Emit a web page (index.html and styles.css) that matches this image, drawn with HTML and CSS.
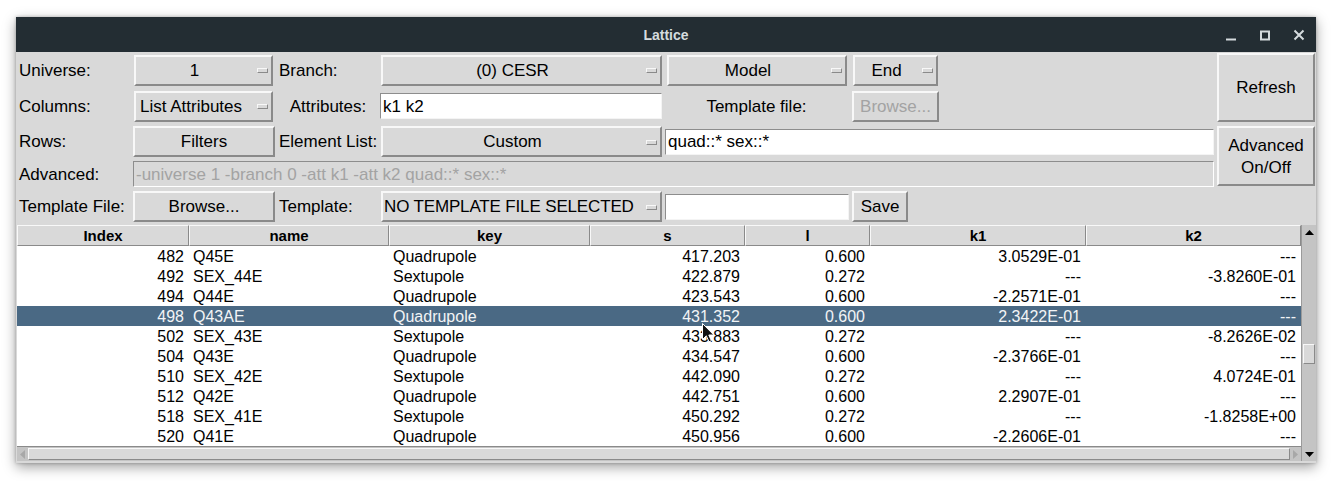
FILE: index.html
```html
<!DOCTYPE html>
<html>
<head>
<meta charset="utf-8">
<title>Lattice</title>
<link rel="stylesheet" href="styles.css">
</head>
<body>
<div class="window">
  <div class="titlebar">
    <div></div>
    <div class="title">Lattice</div>
    <div class="controls">
      <span class="ctl"><svg width="12" height="12" viewBox="0 0 12 12"><path d="M1 10.5H11" stroke="#d5dbde" stroke-width="2" fill="none"/></svg></span>
      <span class="ctl"><svg width="12" height="12" viewBox="0 0 12 12"><rect x="2" y="2.5" width="8" height="8" stroke="#d5dbde" stroke-width="2" fill="none"/></svg></span>
      <span class="ctl"><svg width="12" height="12" viewBox="0 0 12 12"><path d="M1.5 1.5L10.5 10.5M10.5 1.5L1.5 10.5" stroke="#d5dbde" stroke-width="2" fill="none"/></svg></span>
    </div>
  </div>

  <div class="form">
    <!-- row 1 -->
    <div class="lbl rowstart">Universe:</div>
    <div class="mbtn m-c2"><span class="mtext">1</span><span class="ind"></span></div>
    <div class="lbl lbl-c3">Branch:</div>
    <div class="mbtn m-c4"><span class="mtext">(0) CESR</span><span class="ind"></span></div>
    <div class="mbtn m-c5"><span class="mtext">Model</span><span class="ind"></span></div>
    <div class="mbtn m-c6"><span class="mtext">End</span><span class="ind"></span></div>
    <div class="btn refresh">Refresh</div>

    <!-- row 2 -->
    <div class="lbl rowstart">Columns:</div>
    <div class="mbtn m-c2"><span class="mtext mtext-left">List Attributes</span><span class="ind"></span></div>
    <div class="lbl lbl-center">Attributes:</div>
    <div class="entry e-c4">k1 k2</div>
    <div class="lbl lbl-center">Template file:</div>
    <div class="btn b-c6 disabled">Browse...</div>

    <!-- row 3 -->
    <div class="lbl rowstart">Rows:</div>
    <div class="btn b-c2">Filters</div>
    <div class="lbl lbl-c3">Element List:</div>
    <div class="mbtn m-c4"><span class="mtext">Custom</span><span class="ind"></span></div>
    <div class="entry e-wide">quad::* sex::*</div>
    <div class="btn advbtn">Advanced<br>On/Off</div>

    <!-- row 4 -->
    <div class="lbl rowstart">Advanced:</div>
    <div class="entry e-adv disabled-entry">-universe 1 -branch 0 -att k1 -att k2 quad::* sex::*</div>

    <!-- row 5 -->
    <div class="lbl rowstart">Template File:</div>
    <div class="btn b-c2">Browse...</div>
    <div class="lbl lbl-c3">Template:</div>
    <div class="mbtn m-c4"><span class="mtext mtext-tight">NO TEMPLATE FILE SELECTED</span><span class="ind"></span></div>
    <div class="entry e-c5"></div>
    <div class="btn b-save">Save</div>
  </div>

  <div class="tablewrap">
    <div class="table">
      <div class="trow thead">
        <div class="th">Index</div>
        <div class="th">name</div>
        <div class="th">key</div>
        <div class="th">s</div>
        <div class="th">l</div>
        <div class="th">k1</div>
        <div class="th">k2</div>
      </div>
      <div class="tbody">
        <div class="trow"><div class="td r">482</div><div class="td">Q45E</div><div class="td">Quadrupole</div><div class="td r">417.203</div><div class="td r">0.600</div><div class="td r">3.0529E-01</div><div class="td r">---</div></div>
        <div class="trow"><div class="td r">492</div><div class="td">SEX_44E</div><div class="td">Sextupole</div><div class="td r">422.879</div><div class="td r">0.272</div><div class="td r">---</div><div class="td r">-3.8260E-01</div></div>
        <div class="trow"><div class="td r">494</div><div class="td">Q44E</div><div class="td">Quadrupole</div><div class="td r">423.543</div><div class="td r">0.600</div><div class="td r">-2.2571E-01</div><div class="td r">---</div></div>
        <div class="trow selected"><div class="td r">498</div><div class="td">Q43AE</div><div class="td">Quadrupole</div><div class="td r">431.352</div><div class="td r">0.600</div><div class="td r">2.3422E-01</div><div class="td r">---</div></div>
        <div class="trow"><div class="td r">502</div><div class="td">SEX_43E</div><div class="td">Sextupole</div><div class="td r">433.883</div><div class="td r">0.272</div><div class="td r">---</div><div class="td r">-8.2626E-02</div></div>
        <div class="trow"><div class="td r">504</div><div class="td">Q43E</div><div class="td">Quadrupole</div><div class="td r">434.547</div><div class="td r">0.600</div><div class="td r">-2.3766E-01</div><div class="td r">---</div></div>
        <div class="trow"><div class="td r">510</div><div class="td">SEX_42E</div><div class="td">Sextupole</div><div class="td r">442.090</div><div class="td r">0.272</div><div class="td r">---</div><div class="td r">4.0724E-01</div></div>
        <div class="trow"><div class="td r">512</div><div class="td">Q42E</div><div class="td">Quadrupole</div><div class="td r">442.751</div><div class="td r">0.600</div><div class="td r">2.2907E-01</div><div class="td r">---</div></div>
        <div class="trow"><div class="td r">518</div><div class="td">SEX_41E</div><div class="td">Sextupole</div><div class="td r">450.292</div><div class="td r">0.272</div><div class="td r">---</div><div class="td r">-1.8258E+00</div></div>
        <div class="trow"><div class="td r">520</div><div class="td">Q41E</div><div class="td">Quadrupole</div><div class="td r">450.956</div><div class="td r">0.600</div><div class="td r">-2.2606E-01</div><div class="td r">---</div></div>
      </div>
    </div>
    <div class="vscroll">
      <div class="arrow"><svg width="9" height="5" viewBox="0 0 9 5"><polygon points="0,5 9,5 4.5,0" fill="#000"/></svg></div>
      <div class="vtrack"><div class="vthumb" style="margin-top:105px"></div></div>
      <div class="arrow"><svg width="9" height="5" viewBox="0 0 9 5"><polygon points="0,0 9,0 4.5,5" fill="#000"/></svg></div>
    </div>
    <div class="hscroll">
      <div class="harrow"><svg width="5" height="9" viewBox="0 0 5 9"><polygon points="5,0 5,9 0,4.5" fill="#a8a8a8"/></svg></div>
      <div class="hthumb"></div>
      <div class="harrow"><svg width="5" height="9" viewBox="0 0 5 9"><polygon points="0,0 0,9 5,4.5" fill="#a8a8a8"/></svg></div>
    </div>
  </div>
</div>
<svg class="cursor" width="13" height="20" viewBox="0 0 13 20"><path d="M0.5 0.5V16.5L4.3 12.8L7 18.8L9.4 17.8L6.8 12H11.8Z" fill="#111" stroke="#fff" stroke-width="1"/></svg>
</body>
</html>
```

FILE: styles.css
```css
html, body {
  margin: 0;
  padding: 0;
}
body {
  background: #ffffff;
  font-family: "Liberation Sans", Arial, sans-serif;
  color: #000;
  width: 1331px;
  height: 481px;
  overflow: hidden;
  position: relative;
}
.window {
  margin: 17px 0 0 16px;
  width: 1300px;
  height: 446px;
  background: #d9d9d9;
  box-shadow: 0 4px 12px rgba(0, 0, 0, 0.38), 0 0 3px rgba(0, 0, 0, 0.25);
  display: flex;
  flex-direction: column;
}
.titlebar {
  height: 35px;
  flex: none;
  background: #232d33;
  display: grid;
  grid-template-columns: 1fr auto 1fr;
  align-items: center;
}
.title {
  color: #d5dbde;
  font-weight: bold;
  font-size: 14px;
  padding-top: 1px;
}
.controls {
  display: flex;
  justify-content: flex-end;
  height: 35px;
}
.ctl {
  width: 34px;
  height: 35px;
  display: flex;
  align-items: center;
  justify-content: center;
}

/* form grid */
.form {
  display: grid;
  grid-template-columns: 117px 143px 104px 283px 187px 90px 275px 101px;
  grid-template-rows: 36px 36px 35px 30px 35px;
  font-size: 17px;
  flex: none;
}
.lbl {
  display: flex;
  align-items: center;
  padding-left: 3px;
  padding-top: 1px;
  white-space: nowrap;
}
.rowstart {
  grid-column-start: 1;
}
.lbl-c3 {
  padding-left: 3px;
}
.lbl-center {
  justify-content: center;
  padding-left: 0;
}
.btn, .mbtn {
  box-sizing: border-box;
  height: 31px;
  align-self: center;
  background: #d9d9d9;
  border: 2px solid;
  border-color: #f8f8f8 #8a8a8a #8a8a8a #f8f8f8;
  display: flex;
  align-items: center;
  justify-content: center;
  white-space: nowrap;
  padding-top: 1px;
}
.mbtn {
  justify-content: space-between;
}
.mtext {
  flex: 1;
  text-align: center;
}
.mtext-left {
  text-align: left;
  padding-left: 4px;
}
.mtext-tight {
  text-align: left;
  padding-left: 1px;
  letter-spacing: -0.15px;
}
.ind {
  flex: none;
  box-sizing: border-box;
  width: 11px;
  height: 5px;
  border: 1px solid;
  border-color: #f8f8f8 #8a8a8a #8a8a8a #f8f8f8;
  margin: 0 3px 0 4px;
}
.m-c2 { margin: 0 3px 0 1px; }
.b-c2 { margin: 0 1px 0 0; }
.m-c4 { margin: 0 1px; }
.m-c5 { margin: 0 3px 0 4px; }
.m-c6 { margin: 0 2px 0 3px; }
.b-c6 { margin: 0 1px 0 2px; }
.b-save {
  justify-self: start;
  width: 56px;
  margin-left: 2px;
}
.disabled {
  color: #a3a3a3;
}
.refresh {
  grid-column: 8;
  grid-row: 1 / span 2;
  height: auto;
  align-self: stretch;
  margin: 1px 1px 2px 2px;
}
.advbtn {
  grid-column: 8;
  grid-row: 3 / span 2;
  height: auto;
  align-self: stretch;
  margin: 2px 1px 3px 2px;
  text-align: center;
  line-height: 22px;
}
.entry {
  box-sizing: border-box;
  height: 26px;
  align-self: center;
  background: #ffffff;
  border: 1px solid;
  border-color: #8d8d8d #f4f4f4 #f4f4f4 #8d8d8d;
  display: flex;
  align-items: center;
  padding-left: 2px;
  padding-top: 1px;
  white-space: nowrap;
  overflow: hidden;
}
.e-c4 { margin: 0 1px 0 0; }
.e-c5 { margin: 0 1px 0 2px; }
.e-wide {
  grid-column: 5 / span 3;
  margin: 0 1px 0 2px;
}
.e-adv {
  grid-column: 2 / span 6;
  margin: 0 1px 0 0;
}
.disabled-entry {
  background: #d9d9d9;
  color: #a3a3a3;
  border-color: #8d8d8d #ffffff #ffffff #8d8d8d;
}

/* table */
.tablewrap {
  margin: 1px 0 0 1px;
  width: 1299px;
  display: grid;
  grid-template-columns: 1284px 15px;
  grid-template-rows: 221px 15px;
}
.table {
  background: #ffffff;
  overflow: hidden;
}
.trow {
  display: grid;
  grid-template-columns: 172px 200px 201px 155px 125px 216px 215px;
  height: 20px;
}
.thead {
  height: 21px;
  background: #d9d9d9;
}
.th {
  box-sizing: border-box;
  border: 1px solid;
  border-color: #f8f8f8 #8a8a8a #8a8a8a #f8f8f8;
  font-weight: bold;
  font-size: 15px;
  text-align: center;
  line-height: 19px;
}
.td {
  box-sizing: border-box;
  height: 20px;
  font-size: 16px;
  line-height: 18px;
  padding: 2px 4px 0 4px;
  white-space: nowrap;
  overflow: hidden;
}
.td.r {
  text-align: right;
  padding: 2px 5px 0 0;
}
.selected {
  background: #4a6984;
  color: #f2f4f6;
}
.vscroll {
  grid-column: 2;
  grid-row: 1 / span 2;
  background: #c4c4c4;
  border-left: 1px solid #9a9a9a;
  display: flex;
  flex-direction: column;
}
.arrow {
  height: 14px;
  flex: none;
  display: flex;
  align-items: center;
  justify-content: center;
}
.vtrack {
  flex: 1;
}
.vthumb {
  box-sizing: border-box;
  height: 20px;
  margin: 0 1px;
  background: #d9d9d9;
  border: 1px solid;
  border-color: #f8f8f8 #8a8a8a #8a8a8a #f8f8f8;
}
.hscroll {
  grid-column: 1;
  grid-row: 2;
  background: #c4c4c4;
  border-top: 1px solid #8a8a8a;
  display: flex;
  align-items: stretch;
}
.harrow {
  width: 11px;
  flex: none;
  display: flex;
  align-items: center;
  justify-content: center;
}
.hthumb {
  flex: 1;
  box-sizing: border-box;
  margin: 1px 0;
  background: #d9d9d9;
  border: 1px solid;
  border-color: #f8f8f8 #8a8a8a #8a8a8a #f8f8f8;
}
.cursor {
  position: absolute;
  left: 702px;
  top: 323px;
}
```
